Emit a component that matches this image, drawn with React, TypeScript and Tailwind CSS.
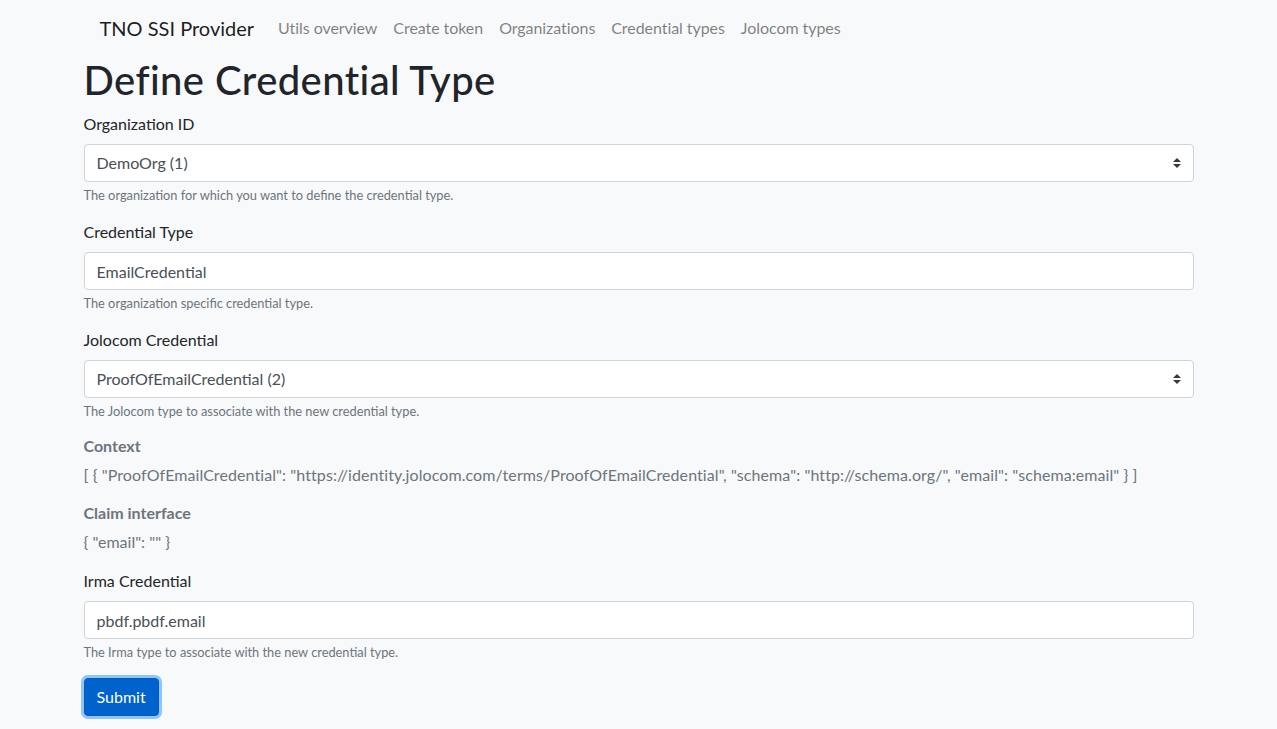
import { useState } from 'react';

/* ---------- DATA ---------- */

const navLinks = ['Utils overview', 'Create token', 'Organizations', 'Credential types', 'Jolocom types'];

const contextJson =
  '[ { "ProofOfEmailCredential": "https://identity.jolocom.com/terms/ProofOfEmailCredential", "schema": "http://schema.org/", "email": "schema:email" } ]';

const font = { fontFamily: 'Lato, "Liberation Sans", sans-serif' };

/* ---------- PARTS ---------- */

function SelectArrows() {
  return (
    <svg width="8" height="10" viewBox="0 0 4 5" className="absolute right-[13px] top-1/2 -translate-y-1/2 pointer-events-none">
      <path fill="#343a40" d="M2 0L0 2h4zm0 5L0 3h4z" />
    </svg>
  );
}

function Help({ children }: { children: string }) {
  return <small className="block mt-1 text-[12.8px] leading-[18px] text-[#6c757d]">{children}</small>;
}

function Label({ children }: { children: string }) {
  return <label className="block mb-2 text-base leading-6 text-[#212529]">{children}</label>;
}

/* ---------- PAGE ---------- */

export default function App() {
  const [org, setOrg] = useState('1');
  const [credType, setCredType] = useState('EmailCredential');
  const [jolocom, setJolocom] = useState('2');
  const [irma, setIrma] = useState('pbdf.pbdf.email');

  const fieldClass =
    'block w-full h-[38px] px-3 py-1.5 text-base leading-6 text-[#495057] bg-white border border-[#ced4da] rounded outline-none';

  return (
    <div className="min-h-screen bg-[#f8f9fa]" style={font}>
      <div className="w-[1140px] mx-auto px-[15px]">

        {/* NAVBAR */}
        <nav className="flex items-center h-14 px-4">
          <span className="mr-4 text-xl leading-[30px] text-black/90">TNO SSI Provider</span>
          <div className="flex">
            {navLinks.map((l) => (
              <a key={l} href="#" className="px-2 text-base leading-6 text-black/50 tracking-[-0.06px]">
                {l}
              </a>
            ))}
          </div>
        </nav>

        <h1 className="mb-2 text-[40px] leading-[48px] font-medium tracking-[0.4px] text-[#212529]">
          Define Credential Type
        </h1>

        <form onSubmit={(e) => e.preventDefault()}>
          {/* ORGANIZATION */}
          <div className="mb-4">
            <Label>Organization ID</Label>
            <div className="relative">
              <select value={org} onChange={(e) => setOrg(e.target.value)} className={fieldClass + ' appearance-none'}>
                <option value="1">DemoOrg (1)</option>
              </select>
              <SelectArrows />
            </div>
            <Help>The organization for which you want to define the credential type.</Help>
          </div>

          {/* CREDENTIAL TYPE */}
          <div className="mb-4">
            <Label>Credential Type</Label>
            <input value={credType} onChange={(e) => setCredType(e.target.value)} className={fieldClass} />
            <Help>The organization specific credential type.</Help>
          </div>

          {/* JOLOCOM */}
          <div>
            <Label>Jolocom Credential</Label>
            <div className="relative">
              <select value={jolocom} onChange={(e) => setJolocom(e.target.value)} className={fieldClass + ' appearance-none'}>
                <option value="2">ProofOfEmailCredential (2)</option>
              </select>
              <SelectArrows />
            </div>
            <Help>The Jolocom type to associate with the new credential type.</Help>
          </div>

          {/* CONTEXT / CLAIM */}
          <div className="mt-[14px] text-base leading-6 text-[#6c757d]">
            <p className="font-bold">Context</p>
            <p className="mt-[5px] tracking-[0.08px]">{contextJson}</p>
            <p className="mt-[14px] font-bold">Claim interface</p>
            <p className="mt-[5px]">{'{ "email": "" }'}</p>
          </div>

          {/* IRMA */}
          <div className="mt-[15px] mb-4">
            <Label>Irma Credential</Label>
            <input value={irma} onChange={(e) => setIrma(e.target.value)} className={fieldClass} />
            <Help>The Irma type to associate with the new credential type.</Help>
          </div>

          <button
            type="submit"
            className="mt-px h-[38px] px-3 text-base leading-6 text-white bg-[#0062cc] border border-[#005cbf] rounded shadow-[0_0_0_3px_rgba(38,143,255,0.5)]"
          >
            Submit
          </button>
        </form>
      </div>
    </div>
  );
}
